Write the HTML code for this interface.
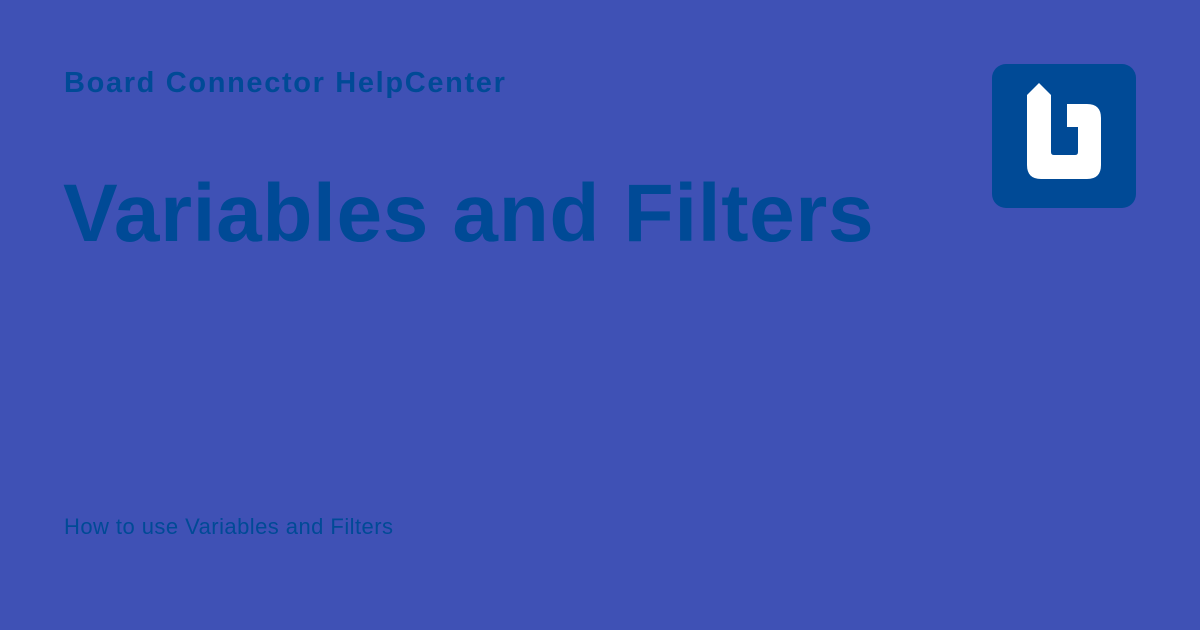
<!DOCTYPE html>
<html><head><style>
body{margin:0;width:1200px;height:630px;background:#3f51b5;position:relative;overflow:hidden;font-family:"Liberation Sans",sans-serif;color:#004a96}
.t1{position:absolute;left:64px;top:67px;font-size:29px;font-weight:bold;letter-spacing:1.65px;white-space:nowrap}
.t2{position:absolute;left:63px;top:167px;font-size:82px;font-weight:bold;letter-spacing:0.65px;white-space:nowrap}
.t3{position:absolute;left:64px;top:514px;font-size:22px;letter-spacing:0.45px;white-space:nowrap}
.logo{position:absolute;left:992px;top:64px;width:144px;height:144px;background:#004a96;border-radius:14px}
</style></head><body>
<div class="t1">Board Connector HelpCenter</div>
<div class="t2">Variables and Filters</div>
<div class="t3">How to use Variables and Filters</div>
<div class="logo"><svg width="144" height="144" viewBox="0 0 144 144"><path fill="#fff" d="M35,31 L47,19 L59,31 L59,88 Q59,91 62,91 L83,91 Q86,91 86,88 L86,63 L75,63 L75,40 L95,40 Q109,40 109,54 L109,101 Q109,115 95,115 L49,115 Q35,115 35,101 Z"/></svg></div>
</body></html>
